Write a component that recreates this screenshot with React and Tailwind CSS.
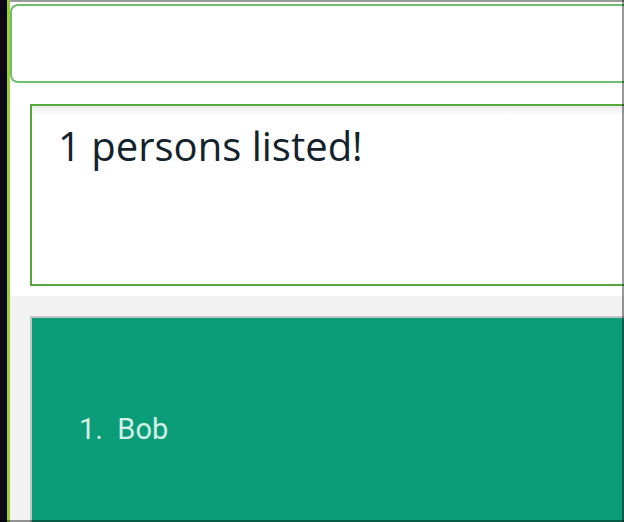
export default function App() {
  return (
    <div className="relative w-[624px] h-[522px] overflow-hidden flex bg-[#0b0714] pl-[7px]">
      {/* app window, lime edge on the left */}
      <div className="flex-1 flex flex-col bg-white pt-[4px] border-l-[3px] border-[#9acd32]">
        {/* command box */}
        <div className="h-[79px] shrink-0 bg-white border-2 border-r-0 border-[#6dbf6d] rounded-l-[8px]" />

        {/* result display */}
        <div className="mt-[21px] ml-[20px] h-[182px] shrink-0 border-2 border-r-0 border-[#56a83c] bg-white">
          <div className="h-[10px] bg-gradient-to-b from-[#ebebeb] to-white" />
          <p className="pl-[26px] pt-[6px] text-[40px] leading-[48px] text-[#13222b]" style={{ fontFamily: '"Open Sans", sans-serif' }}>
            1 persons listed!
          </p>
        </div>

        {/* person list */}
        <div className="mt-[10px] flex-1 flex flex-col bg-[#f2f2f2] pt-[20px] pl-[20px]">
          <div className="flex-1 flex items-center bg-[#0b9c78] border-t-2 border-l-2 border-[#c4c4c4] pl-[47px] pt-[20px]">
            <span className="text-[29px] text-[#d3efe6]" style={{ fontFamily: 'Roboto, sans-serif' }}>
              1.&nbsp; Bob
            </span>
          </div>
        </div>
      </div>

      {/* window frame */}
      <div className="absolute top-0 left-[10px] right-0 h-[2px] bg-black/40" />
      <div className="absolute top-0 bottom-0 right-0 w-[2px] bg-black/40" />
      <div className="absolute bottom-0 left-0 right-0 h-[2px] bg-black/40" />
    </div>
  );
}
